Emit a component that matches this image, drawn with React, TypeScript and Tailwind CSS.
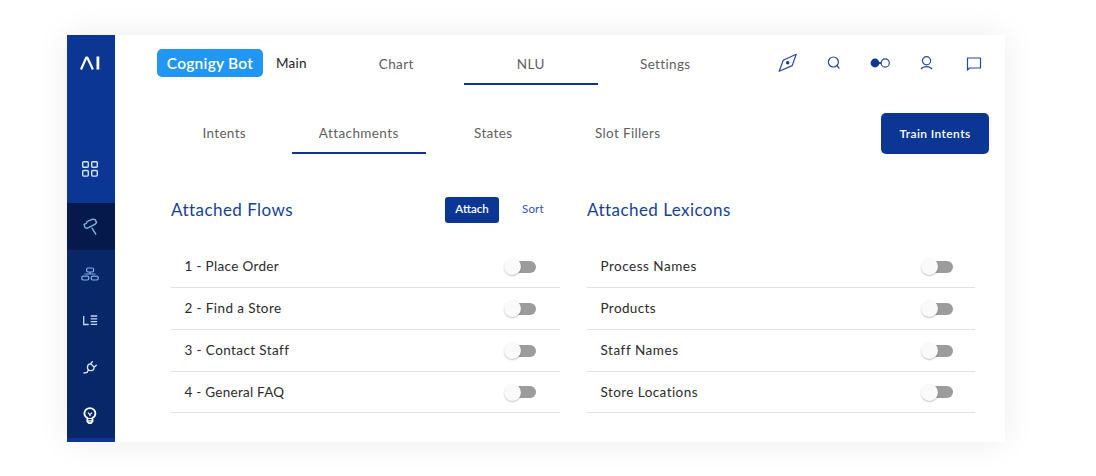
import type { ReactNode } from "react";

const flows = [
  { name: "1 - Place Order", spacing: "tracking-[0.33px]" },
  { name: "2 - Find a Store", spacing: "tracking-[0.4px]" },
  { name: "3 - Contact Staff", spacing: "tracking-[0.4px]" },
  { name: "4 - General FAQ", spacing: "tracking-[0.26px]" },
];

const lexicons = [
  { name: "Process Names", spacing: "tracking-[0.5px]" },
  { name: "Products", spacing: "tracking-[0.38px]" },
  { name: "Staff Names", spacing: "tracking-[0.55px]" },
  { name: "Store Locations", spacing: "tracking-[0.43px]" },
];

function Tab({ children, active = false }: { children: ReactNode; active?: boolean }) {
  return (
    <button
      className={
        active
          ? "h-full w-[134.5px] border-b-2 border-[#0b3694] pt-[2px] text-[13.5px] tracking-[0.4px] text-[#5f5f5f]"
          : "h-full w-[134.5px] border-b-2 border-transparent pt-[2px] text-[13.5px] tracking-[0.35px] text-[#5f5f5f]"
      }
    >
      {children}
    </button>
  );
}

function Toggle() {
  return (
    <span className="flex h-[18px] w-[32px] items-center">
      <span className="z-10 size-[17px] shrink-0 rounded-full bg-[#fafafa] shadow-[0_1px_1.5px_rgba(0,0,0,0.24)]" />
      <span className="-ml-[12px] h-[12px] w-[27px] shrink-0 rounded-full bg-[#9c9c9c]" />
    </span>
  );
}

function Row({ name, spacing }: { name: string; spacing: string }) {
  return (
    <li className="flex h-[42px] items-center justify-between border-b border-[#e2e2e2] pl-[13.5px] last:h-[41px]">
      <span className={`text-[13.5px] text-[#2b2b2b] ${spacing}`}>{name}</span>
      <Toggle />
    </li>
  );
}

function Sidebar() {
  return (
    <nav className="flex w-[48px] shrink-0 flex-col bg-[#0b3694] text-[#dbe5fa]">
      <div className="flex h-[56px] items-center justify-center pr-[2px]">
        <svg className="h-[14px] w-[20px]" viewBox="0 0 20 14" fill="none" stroke="#fff" strokeWidth="2.2">
          <path d="M1 13.5 6.3 1.5h1L12.9 13.5" strokeLinejoin="round" />
          <path d="M17.9.5v13" strokeWidth="2.8" />
        </svg>
      </div>
      <div className="flex h-[112px] items-end justify-center pr-[2px] pb-[25px]">
        <svg className="h-[18px] w-[18px]" viewBox="0 0 18 18" fill="none" stroke="currentColor" strokeWidth="1.4">
          <rect x="1.7" y="1.7" width="5.6" height="5.6" rx="1" />
          <rect x="10.7" y="1.7" width="5.6" height="5.6" rx="1" />
          <rect x="1.7" y="10.5" width="5.6" height="5.6" rx="1" />
          <rect x="10.7" y="10.5" width="5.6" height="5.6" rx="1" />
        </svg>
      </div>
      <div className="flex h-[47px] items-center justify-center bg-[#051a4a]">
        <svg className="h-[20px] w-[18px]" viewBox="0 0 18 20" fill="none" stroke="#7fb2e8" strokeWidth="1.4" strokeLinecap="round" strokeLinejoin="round">
          <path d="M3 10.6 2 7.4 4.4 6.4 5 4.6 10.8 2.2 13.2 2.6 14.6 5.6 12.8 7.4 5 11.4Z" />
          <path d="m10 11.2 3.8 6" />
        </svg>
      </div>
      <div className="flex h-[188px] flex-col items-center bg-[#072768] pr-[2px]">
        <div className="flex h-[47px] items-center">
          <svg className="h-[14px] w-[20px]" viewBox="0 0 20 14" fill="none" stroke="#7fb2e8" strokeWidth="1.2">
            <rect x="6.6" y="1" width="7" height="4" rx="1.4" />
            <rect x="1.8" y="9.2" width="7" height="3.8" rx="1.4" />
            <rect x="11.2" y="9.2" width="7" height="3.8" rx="1.4" />
            <path d="M10 5v2M4.5 7h11" />
          </svg>
        </div>
        <div className="flex h-[47px] items-center">
          <svg className="h-[11px] w-[16px]" viewBox="0 0 16 11" fill="none" stroke="#cbd7ee" strokeWidth="1.3">
            <path d="M1.7 1v8.5h5M8.7 1h6.5M8.7 3.8h6.5M8.7 6.6h6.5M8.7 9.4h6.5" />
          </svg>
        </div>
        <div className="flex h-[47px] items-center">
          <svg className="h-[14px] w-[14px]" viewBox="0 0 14 14" fill="none" stroke="#dfe7f6" strokeWidth="1.3" strokeLinecap="round" strokeLinejoin="round">
            <path d="m4.5 5.4 1-2 2.3-.6 3.4 3.4-.6 2.5-1.9 1-2.7-.4-1.5-1.6ZM7.2 3l2.2-2.2M11 6.2l2.3-2M5.2 8.9 4.2 11.4 1 12" />
          </svg>
        </div>
        <div className="flex h-[47px] items-center pt-[2px]">
          <svg className="h-[18px] w-[14px]" viewBox="0 0 14 18" fill="none" stroke="#fff" strokeWidth="1.8" strokeLinejoin="round">
            <path d="M4.3 10.8C2.4 9.8 1.4 8.2 1.4 6.4a5.5 5.3 0 0 1 11 0c0 1.8-1 3.4-2.9 4.4v3.7L8 16.2H6l-1.7-1.7Z" />
            <path d="M4.5 11.5h5M4.5 13.8h5M7 9.2V7.7M4.9 5.6 7 7.6l2-2" strokeWidth="1.2" />
          </svg>
        </div>
      </div>
    </nav>
  );
}

function HeaderIcons() {
  return (
    <div className="ml-[45px] flex h-[56px] items-center text-[#27489c]">
      <svg className="h-[20px] w-[20px]" viewBox="0 0 20 20" fill="none" stroke="currentColor" strokeWidth="1.2" strokeLinejoin="round">
        <path d="M1.2 18.2 5.2 7.2 18.2 1.3 14.2 12.6Z" />
        <circle cx="9.7" cy="9.8" r="1.7" fill="#0b3694" stroke="none" />
      </svg>
      <svg className="ml-[29.5px] h-[14px] w-[14px]" viewBox="0 0 14 14" fill="none" stroke="currentColor" strokeWidth="1.2">
        <circle cx="6.4" cy="6" r="5" />
        <path d="m9.6 9.2 2.8 3.4" />
      </svg>
      <svg className="ml-[28.5px] h-[10px] w-[20px]" viewBox="0 0 20 10" fill="none" stroke="currentColor" strokeWidth="1.2">
        <circle cx="5" cy="5" r="4.4" fill="#0b3694" stroke="none" />
        <path d="M9 5h2" strokeWidth="1.8" />
        <circle cx="15.2" cy="5" r="4.1" />
      </svg>
      <svg className="ml-[30px] h-[14px] w-[13px]" viewBox="0 0 13 14" fill="none" stroke="currentColor" strokeWidth="1.2">
        <circle cx="6.5" cy="4.8" r="4.1" />
        <path d="M1 13.2c1.3-1.9 3.1-2.6 5.5-2.6s4.2.7 5.5 2.6" />
      </svg>
      <svg className="ml-[33px] h-[15px] w-[16px]" viewBox="0 0 16 15" fill="none" stroke="currentColor" strokeWidth="1.2" strokeLinejoin="round">
        <path d="M1.5 2h13v10h-11l-2 2Z" />
      </svg>
    </div>
  );
}

function ListColumn({ items, inset }: { items: { name: string; spacing: string }[]; inset: string }) {
  return (
    <ul className={`mt-[23px] ${inset}`}>
      {items.map((item) => (
        <Row key={item.name} {...item} />
      ))}
    </ul>
  );
}

export default function App() {
  return (
    <main className="h-[476px] w-[1096px] overflow-hidden bg-white pt-[35px] pl-[67px] font-['Lato',sans-serif]">
      <div className="flex h-[407px] w-[938px] bg-white shadow-[0_0_30px_rgba(0,0,0,0.08)]">
        <Sidebar />
        <div className="flex-1 pl-[42px]">
          <header className="flex h-[50px]">
            <div className="flex w-[172px] items-start pt-[14px]">
              <span className="flex h-[28px] w-[106px] items-center justify-center rounded-[5px] bg-[#2196f3] pt-[1px] text-[15.5px] font-semibold tracking-[0.25px] text-white">
                Cognigy Bot
              </span>
              <span className="ml-[13px] text-[13.5px] leading-[28px] tracking-[0.2px] text-[#222]">Main</span>
            </div>
            <div className="flex h-[50px] pt-[8px]">
              <Tab>Chart</Tab>
              <Tab active>NLU</Tab>
              <Tab>Settings</Tab>
            </div>
            <HeaderIcons />
          </header>
          <div className="mt-[28px] flex h-[41px] justify-between pr-[16px]">
            <div className="flex">
              <Tab>Intents</Tab>
              <Tab active>Attachments</Tab>
              <Tab>States</Tab>
              <Tab>Slot Fillers</Tab>
            </div>
            <button className="h-[41px] w-[108px] rounded-[5px] bg-[#0b3694] text-[12px] font-semibold tracking-[0.4px] text-white">
              Train Intents
            </button>
          </div>
          <div className="mt-[43px] ml-[14px] flex gap-[27px]">
            <section className="w-[389px]">
              <div className="flex h-[26px] items-center">
                <h2 className="w-[274px] text-[17px] leading-[26px] tracking-[0.45px] text-[#173f9a]">Attached Flows</h2>
                <button className="h-[26px] w-[54px] rounded-[3px] bg-[#0b3694] pb-[2px] text-[11.5px] font-semibold text-white">Attach</button>
                <button className="ml-[23px] pb-[2px] text-[11.5px] tracking-[0.2px] text-[#36549f]">Sort</button>
              </div>
              <ListColumn items={flows} inset="[&>li]:pr-[24px]" />
            </section>
            <section className="w-[388px]">
              <h2 className="text-[17px] leading-[26px] tracking-[0.45px] text-[#173f9a]">Attached Lexicons</h2>
              <ListColumn items={lexicons} inset="[&>li]:pr-[22px]" />
            </section>
          </div>
        </div>
      </div>
    </main>
  );
}
